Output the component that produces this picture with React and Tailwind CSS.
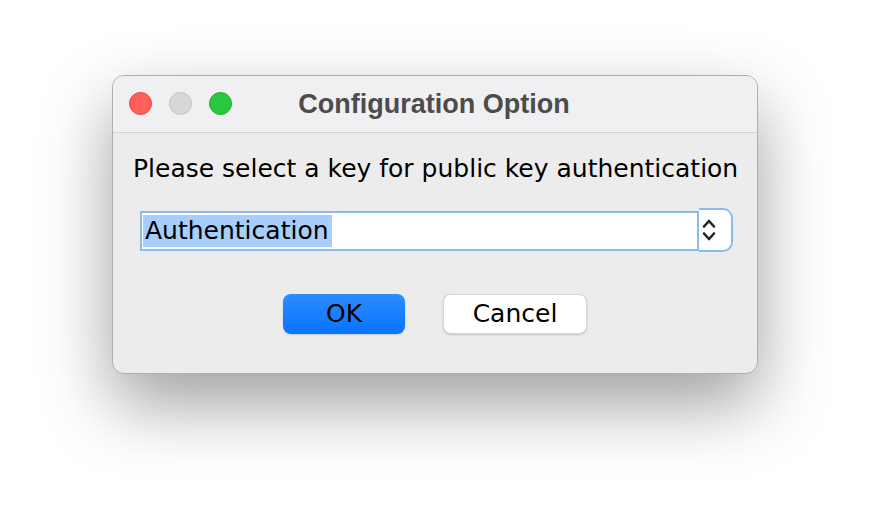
import React from "react";

const TrafficLights = () => (
  <div className="absolute left-[16px] top-[16px] flex gap-[17px]">
    <span className="block w-[23px] h-[23px] rounded-full bg-[#fe5f57] border border-[#e2463f]" />
    <span className="block w-[23px] h-[23px] rounded-full bg-[#d7d6d8] border border-[#c4c3c5]" />
    <span className="block w-[23px] h-[23px] rounded-full bg-[#2ac840] border border-[#1dac2c]" />
  </div>
);

const Chevrons = () => (
  <svg width="14" height="24" viewBox="0 0 14 24" fill="none">
    <path d="M2 8.5 L7 3 L12 8.5" stroke="#232323" strokeWidth="2.6" strokeLinecap="round" strokeLinejoin="round" />
    <path d="M2 15.5 L7 21 L12 15.5" stroke="#232323" strokeWidth="2.6" strokeLinecap="round" strokeLinejoin="round" />
  </svg>
);

const KeyCombo = () => (
  <div className="ml-[27px] w-[593px] flex items-center">
    <div className="flex-1 h-[40px] bg-white border-2 border-[#8bbaf0] flex items-center pl-[1px] mt-[2px]">
      <span className="bg-[#a6cdfb] pl-[2px] pr-[3px] leading-[32px] text-black">Authentication</span>
    </div>
    <div className="w-[34px] h-[44px] bg-white border-2 border-l-0 border-[#8bbaf0] rounded-r-[10px] flex items-center pl-[3px]">
      <Chevrons />
    </div>
  </div>
);

const ConfigDialog = () => {
  return (
    <div className="w-[870px] h-[522px] bg-white flex justify-center pt-[75px] font-['DejaVu_Sans',sans-serif]">
      <div className="w-[646px] h-[299px] rounded-[12px] bg-[#ececec] border border-[#aeaeae] shadow-[0_30px_70px_rgba(0,0,0,0.38)] overflow-hidden flex flex-col">
        <div className="relative h-[57px] shrink-0 bg-[#f0eff1] border-b border-[#d2d2d2] flex items-center justify-center">
          <TrafficLights />
          <span className="font-['Liberation_Sans',sans-serif] font-bold text-[27px] text-[#4c4c4c] ml-[-2px]">
            Configuration Option
          </span>
        </div>
        <p className="mt-[21px] ml-[20px] text-[25px] leading-[30px] text-black">
          Please select a key for public key authentication
        </p>
        <div className="mt-[24px] text-[25px]">
          <KeyCombo />
        </div>
        <div className="mt-[42px] flex justify-center gap-[38px] text-[25px]">
          <button className="w-[122px] h-[40px] rounded-[8px] bg-gradient-to-b from-[#2b8cff] to-[#0673ff] text-black shadow-[0_1px_2px_rgba(0,0,0,0.15)]">
            OK
          </button>
          <button className="w-[144px] h-[40px] rounded-[8px] bg-white text-black border border-[#d6d6d6] shadow-[0_1px_2px_rgba(0,0,0,0.18)]">
            Cancel
          </button>
        </div>
      </div>
    </div>
  );
};

export default ConfigDialog;
